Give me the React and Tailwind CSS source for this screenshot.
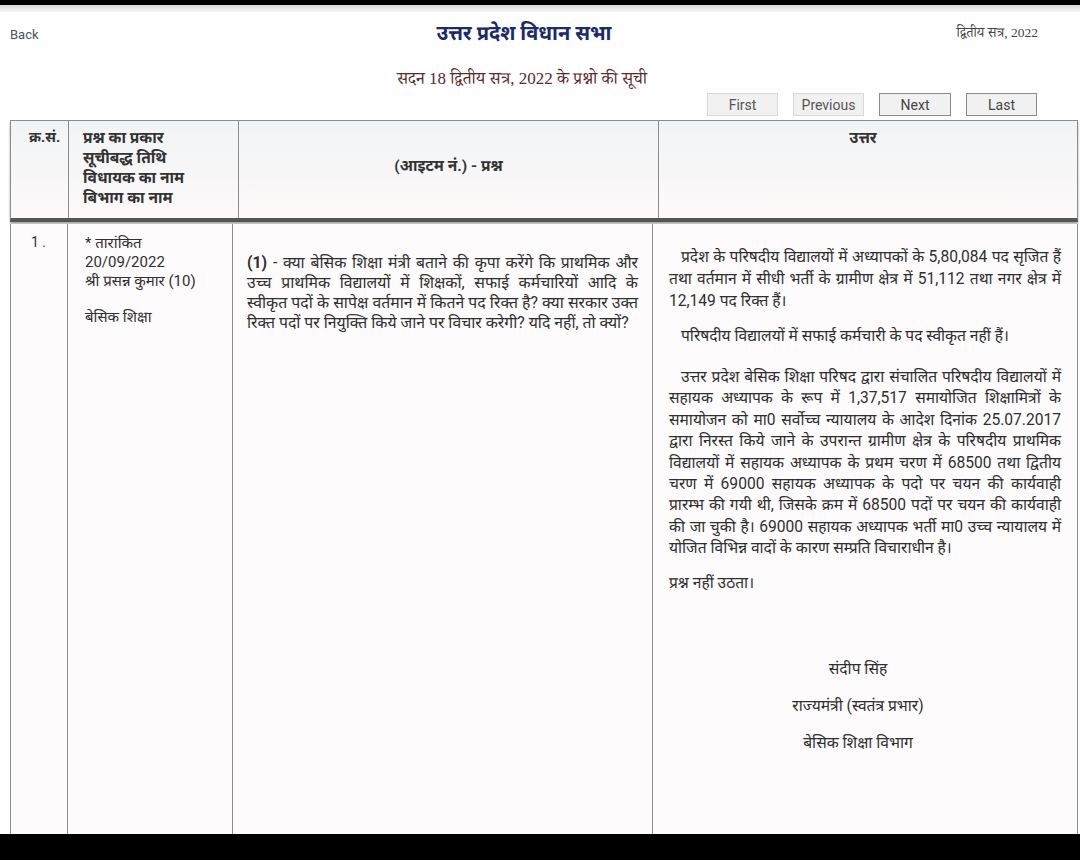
import React from "react";

const qLines = [
  <><span className="font-bold">(1)</span> - क्या बेसिक शिक्षा मंत्री बताने की कृपा करेंगे कि प्राथमिक और</>,
  <>उच्च प्राथमिक विद्यालयों में शिक्षकों, सफाई कर्मचारियों आदि के</>,
  <>स्वीकृत पदों के सापेक्ष वर्तमान में कितने पद रिक्त है? क्या सरकार उक्त</>,
];

export default function App() {
  return (
    <div className="w-[1080px] h-[860px] bg-black flex flex-col overflow-hidden font-['Roboto','Noto_Sans_Devanagari','Noto_Sans',sans-serif]">
      <div className="h-[5px] bg-black" />
      <div className="h-[7px] bg-gradient-to-b from-[#d9d9d9] to-[#f6f6f6]" />
      <div className="bg-[#fefefe] h-[822px] flex flex-col">
        {/* top line */}
        <div className="h-[42px] grid grid-cols-[1fr_auto_1fr] items-center pl-[10px] pr-[42px]">
          <span className="text-[13px] text-[#4b5563] leading-none mt-[2px]">Back</span>
          <span className="text-[20px] font-bold text-[#1b2a6b] leading-none">उत्तर प्रदेश विधान सभा</span>
          <span className="justify-self-end text-[13.5px] text-[#444] leading-none font-['Liberation_Serif','Noto_Serif_Devanagari',serif]">द्वितीय सत्र, 2022</span>
        </div>
        {/* subtitle */}
        <div className="h-[38px] flex justify-center items-center pr-[36px] pt-[10px]">
          <span className="text-[17px] text-[#5b2b2b] leading-none font-['Liberation_Serif','Noto_Serif_Devanagari',serif]">सदन 18 द्वितीय सत्र, 2022 के प्रश्नो की सूची</span>
        </div>
        {/* buttons */}
        <div className="h-[28px] flex justify-end items-start gap-[15px] pr-[43px] pt-[1px]">
          <button className="w-[71px] h-[23px] bg-[#f1f1f1] border border-[#d8d8d8] text-[14px] text-[#555] leading-none">First</button>
          <button className="w-[71px] h-[23px] bg-[#f1f1f1] border border-[#d8d8d8] text-[14px] text-[#555] leading-none">Previous</button>
          <button className="w-[72px] h-[23px] bg-[#f1f1f1] border border-[#8a8a8a] text-[14px] text-[#444] leading-none">Next</button>
          <button className="w-[71px] h-[23px] bg-[#f1f1f1] border border-[#8a8a8a] text-[14px] text-[#444] leading-none">Last</button>
        </div>
        {/* header table */}
        <div className="ml-[10px] mr-[2px] grid grid-cols-[58px_170px_420px_1fr] h-[102px] border border-[#8d8d8d] border-b-[4px] border-b-[#555] bg-gradient-to-b from-[#f1f4f6] to-[#fdf9f9] text-[15.5px] font-bold text-[#333] shadow-[0_2px_2px_rgba(0,0,0,0.35)]">
          <div className="border-r border-[#8d8d8d] pl-[18px] pt-[7px] leading-[20px] text-[14.5px]">क्र.सं.</div>
          <div className="border-r border-[#8d8d8d] pl-[14px] pt-[7px] leading-[20px] flex flex-col">
            <span>प्रश्न का प्रकार</span>
            <span>सूचीबद्ध तिथि</span>
            <span>विधायक का नाम</span>
            <span>बिभाग का नाम</span>
          </div>
          <div className="border-r border-[#8d8d8d] flex items-center justify-center pb-[6px]">(आइटम नं.) - प्रश्न</div>
          <div className="flex justify-center pt-[7px] leading-[20px] pr-[10px]">उत्तर</div>
        </div>
        {/* body table */}
        <div className="ml-[10px] mr-[2px] mt-[2px] flex-1 grid grid-cols-[57px_165px_420px_1fr] border-x border-[#8d8d8d] bg-[#fdfbfb] text-[15px] text-[#2f2f2f]">
          <div className="border-r border-[#8d8d8d] pl-[20px] pt-[8px] leading-[20px] text-[14px]">1 .</div>
          <div className="border-r border-[#8d8d8d] pl-[17px] pt-[10px] leading-[19px] flex flex-col">
            <span>* तारांकित</span>
            <span>20/09/2022</span>
            <span>श्री प्रसन्न कुमार (10)</span>
            <span className="mt-[17px]">बेसिक शिक्षा</span>
          </div>
          <div className="border-r border-[#8d8d8d] pl-[14px] pr-[14px] pt-[29px]">
            <div className="leading-[20px] text-[15.8px] flex flex-col">
              {qLines.map((l, i) => (
                <span key={i} className="text-justify [text-align-last:justify] whitespace-nowrap">{l}</span>
              ))}
              <span>रिक्त पदों पर नियुक्ति किये जाने पर विचार करेगी? यदि नहीं, तो क्यों?</span>
            </div>
          </div>
          <div className="pl-[16px] pr-[16px] pt-[22px] text-[15.6px]">
            <p className="text-justify leading-[22px] indent-[12px]">
              प्रदेश के परिषदीय विद्यालयों में अध्यापकों के 5,80,084 पद सृजित हैं तथा वर्तमान में सीधी भर्ती के ग्रामीण क्षेत्र में 51,112 तथा नगर क्षेत्र में 12,149 पद रिक्त हैं।
            </p>
            <p className="mt-[13px] leading-[22px] indent-[12px]">परिषदीय विद्यालयों में सफाई कर्मचारी के पद स्वीकृत नहीं हैं।</p>
            <p className="mt-[20px] text-justify leading-[21.4px] indent-[12px]">
              उत्तर प्रदेश बेसिक शिक्षा परिषद द्वारा संचालित परिषदीय विद्यालयों में सहायक अध्यापक के रूप में 1,37,517 समायोजित शिक्षामित्रों के समायोजन को मा0 सर्वोच्च न्यायालय के आदेश दिनांक 25.07.2017 द्वारा निरस्त किये जाने के उपरान्त ग्रामीण क्षेत्र के परिषदीय प्राथमिक विद्यालयों में सहायक अध्यापक के प्रथम चरण में 68500 तथा द्वितीय चरण में 69000 सहायक अध्यापक के पदो पर चयन की कार्यवाही प्रारम्भ की गयी थी, जिसके क्रम में 68500 पदों पर चयन की कार्यवाही की जा चुकी है। 69000 सहायक अध्यापक भर्ती मा0 उच्च न्यायालय में योजित विभिन्न वादों के कारण सम्प्रति विचाराधीन है।
            </p>
            <p className="mt-[12px] leading-[22px]">प्रश्न नहीं उठता।</p>
            <div className="mt-[64px] flex flex-col items-center pr-[14px] leading-[22px] gap-[15px]">
              <span>संदीप सिंह</span>
              <span>राज्यमंत्री (स्वतंत्र प्रभार)</span>
              <span>बेसिक शिक्षा विभाग</span>
            </div>
          </div>
        </div>
      </div>
      <div className="flex-1 bg-black" />
    </div>
  );
}
